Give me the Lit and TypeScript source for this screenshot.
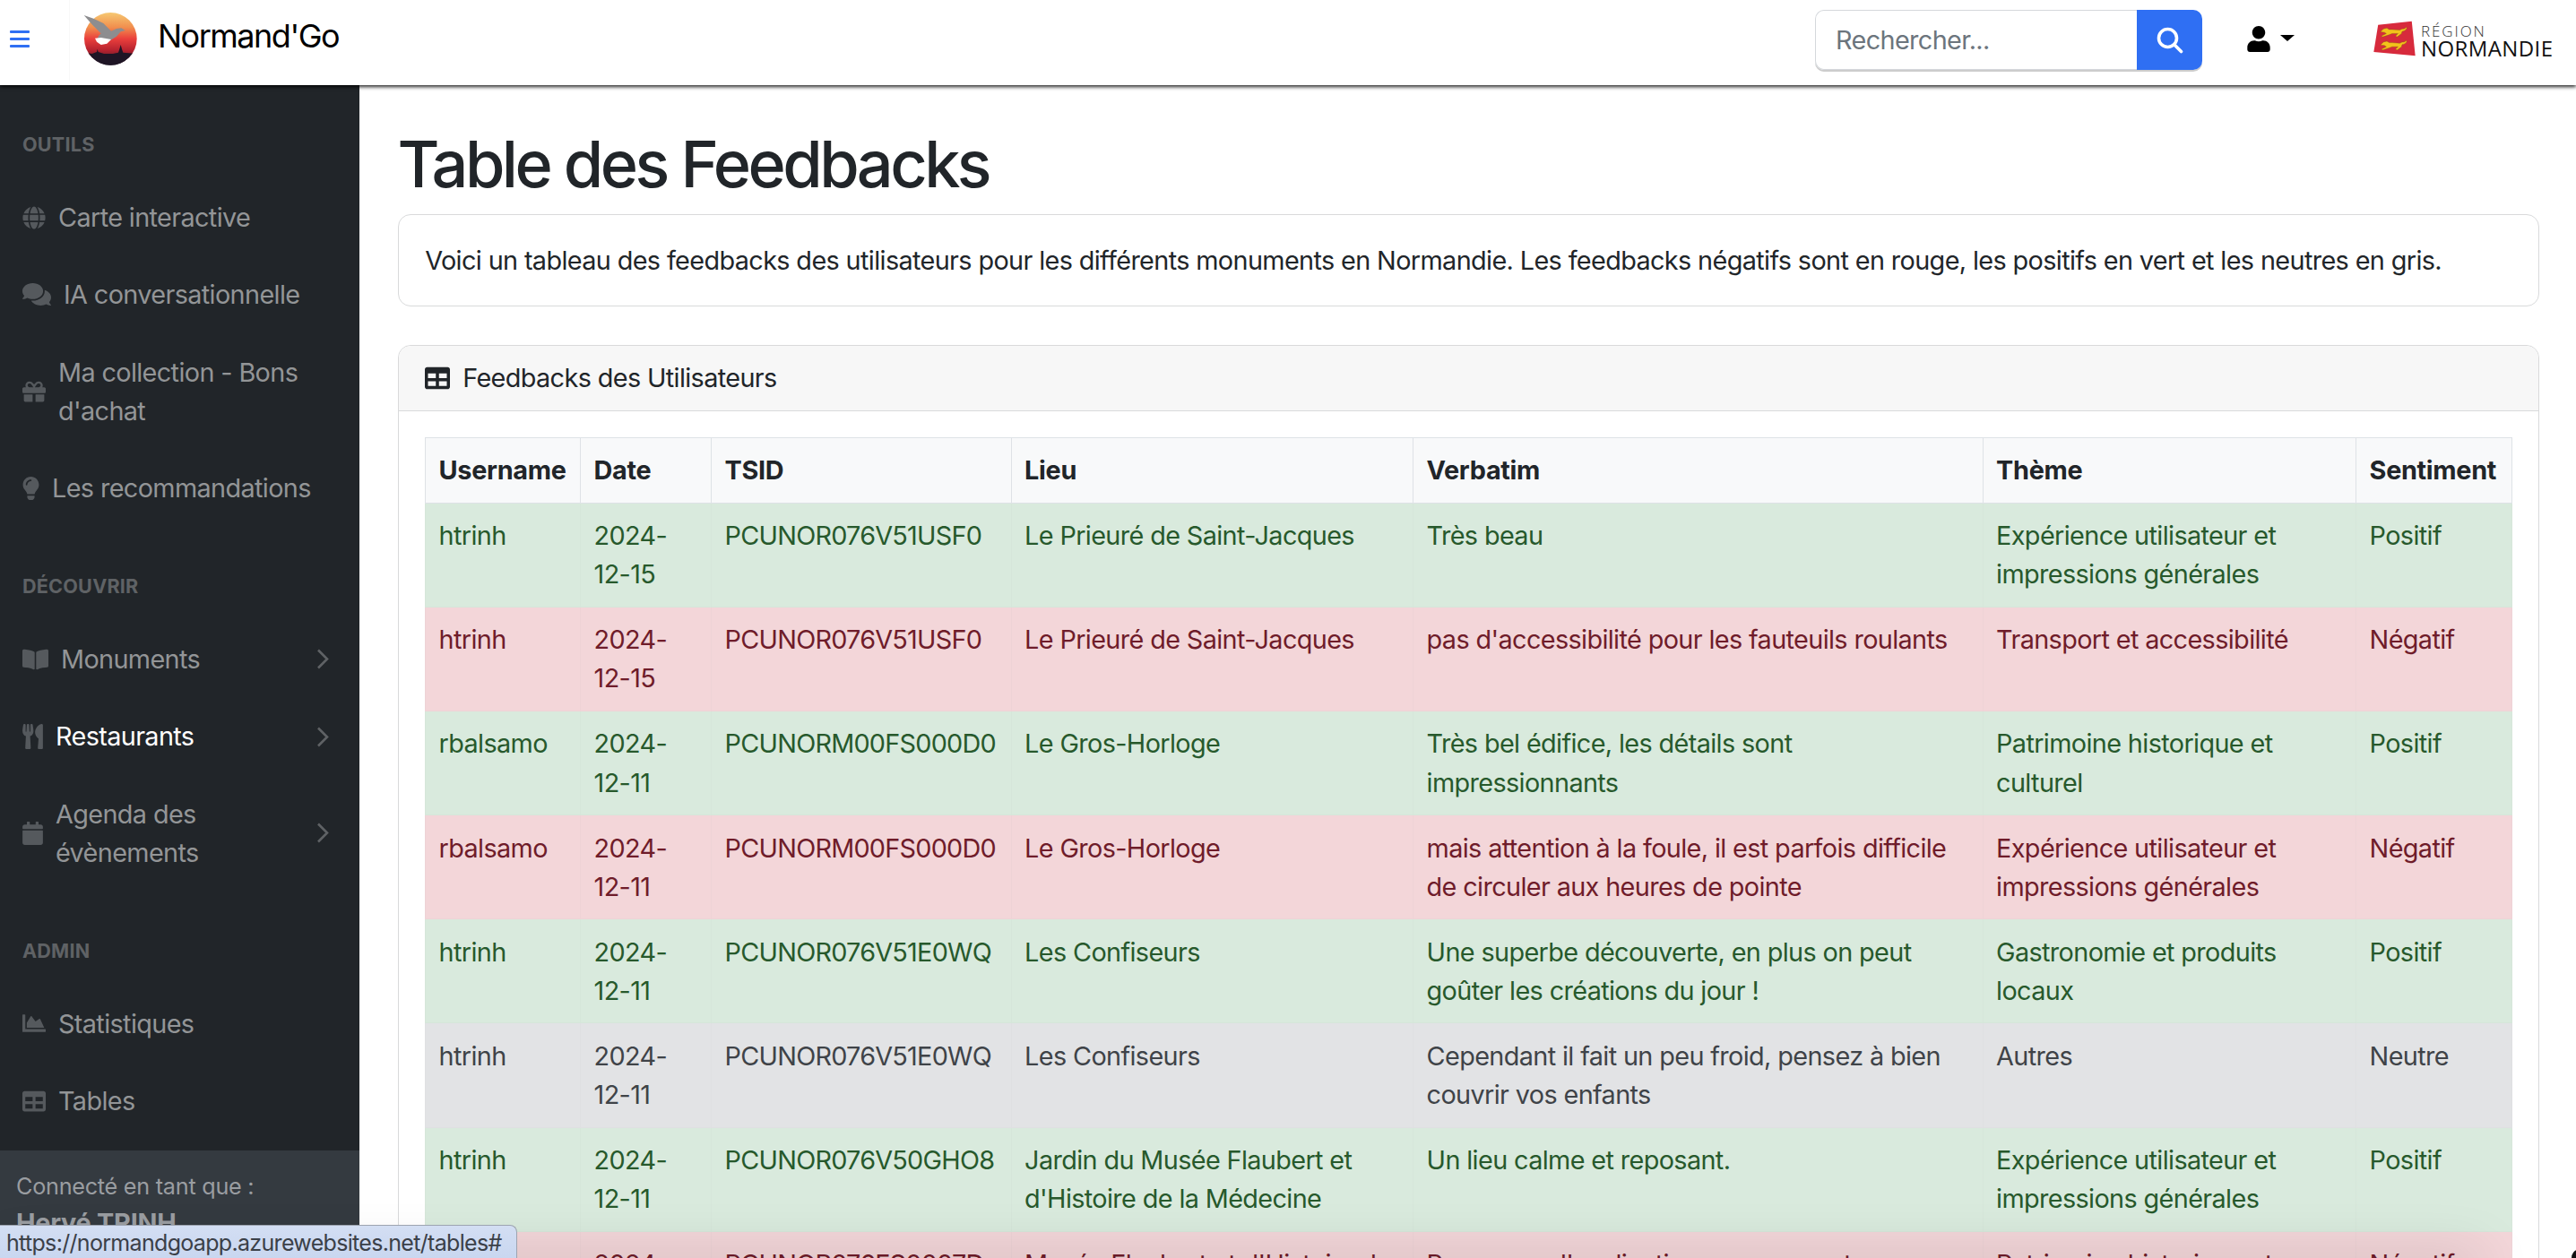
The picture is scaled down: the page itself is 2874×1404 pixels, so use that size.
import { LitElement, css, html, svg } from 'lit';
import { customElement } from 'lit/decorators.js';

const ICONS = {
  user: { box: '0 0 448 512', d: 'M224 256c70.7 0 128-57.3 128-128S294.7 0 224 0 96 57.3 96 128s57.3 128 128 128zm89.6 32h-16.7c-22.2 10.2-46.9 16-72.9 16s-50.6-5.8-72.9-16h-16.7C60.2 288 0 348.2 0 422.4V464c0 26.5 21.5 48 48 48h352c26.5 0 48-21.5 48-48v-41.6c0-74.2-60.2-134.4-134.4-134.4z' },
  table: { box: '0 0 512 512', d: 'M464 32H48C21.49 32 0 53.49 0 80v352c0 26.51 21.49 48 48 48h416c26.51 0 48-21.49 48-48V80c0-26.51-21.49-48-48-48zM224 416H64v-96h160v96zm0-160H64v-96h160v96zm224 160H288v-96h160v96zm0-160H288v-96h160v96z' },
  gift: { box: '0 0 512 512', d: 'M32 448c0 17.7 14.3 32 32 32h160V320H32v128zm256 32h160c17.7 0 32-14.3 32-32V320H288v160zm192-320h-42.1c6.2-12.1 10.1-25.5 10.1-40 0-48.5-39.5-88-88-88-41.6 0-68.5 21.3-103 68.3-34.5-47-61.4-68.3-103-68.3-48.5 0-88 39.5-88 88 0 14.5 3.8 27.9 10.1 40H32c-17.7 0-32 14.3-32 32v80c0 8.8 7.2 16 16 16h480c8.8 0 16-7.2 16-16v-80c0-17.7-14.3-32-32-32zm-326.1 0c-22.1 0-40-17.9-40-40s17.9-40 40-40c19.9 0 34.6 3.3 86.1 80h-86.1zm206.1 0h-86.1c51.4-76.5 65.7-80 86.1-80 22.1 0 40 17.9 40 40s-17.9 40-40 40z' },
  bulb: { box: '0 0 352 512', d: 'M96.06 454.35c.01 6.29 1.87 12.45 5.36 17.69l17.09 25.69a31.99 31.99 0 0 0 26.64 14.28h61.71a31.99 31.99 0 0 0 26.64-14.28l17.09-25.69a31.989 31.989 0 0 0 5.36-17.69l.04-38.35H96.01l.05 38.35zM0 176c0 44.37 16.45 84.85 43.56 115.78 16.52 18.85 42.36 58.23 52.21 91.45.04.26.07.52.11.78h160.24c.04-.26.07-.51.11-.78 9.85-33.22 35.69-72.6 52.21-91.45C335.55 260.85 352 220.37 352 176 352 78.61 272.91-.3 175.45 0 73.44.31 0 82.97 0 176zm176-80c-44.11 0-80 35.89-80 80 0 8.84-7.16 16-16 16s-16-7.16-16-16c0-61.76 50.24-112 112-112 8.84 0 16 7.16 16 16s-7.16 16-16 16z' },
  calendar: { box: '0 0 448 512', d: 'M12 192h424c6.6 0 12 5.4 12 12v260c0 26.5-21.5 48-48 48H48c-26.5 0-48-21.5-48-48V204c0-6.6 5.4-12 12-12zm436-44v-36c0-26.5-21.5-48-48-48h-48V12c0-6.6-5.4-12-12-12h-40c-6.6 0-12 5.4-12 12v52H160V12c0-6.6-5.4-12-12-12h-40c-6.6 0-12 5.4-12 12v52H48C21.5 64 0 85.5 0 112v36c0 6.6 5.4 12 12 12h424c6.6 0 12-5.4 12-12z' },
  book: { box: '0 0 576 512', d: 'M542.22 32.05c-54.8 3.11-163.72 14.43-230.96 55.59-4.64 2.84-7.27 7.89-7.27 13.17v363.87c0 11.55 12.63 18.85 23.28 13.49 69.18-34.82 169.23-44.32 218.7-46.92 16.89-.89 30.02-14.43 30.02-30.66V62.75c.01-17.71-15.35-31.74-33.77-30.7zM264.73 87.64C197.5 46.48 88.58 35.17 33.78 32.05 15.36 31.01 0 45.04 0 62.75V400.6c0 16.24 13.13 29.78 30.02 30.66 49.49 2.6 149.59 12.11 218.77 46.95 10.62 5.35 23.21-1.94 23.21-13.46V100.63c0-5.29-2.62-10.1-7.27-12.99z' },
  utensils: { box: '0 0 416 512', d: 'M207.9 15.2c.8 4.7 16.1 94.5 16.1 128.8 0 52.3-27.8 89.6-68.9 104.6L168 486.7c.7 13.7-10.2 25.3-24 25.3H80c-13.7 0-24.7-11.5-24-25.3l12.9-238.1C27.7 233.6 0 196.2 0 144 0 109.6 15.3 19.9 16.1 15.2 19.3-5.1 61.4-5.4 64 16.3v141.2c1.3 3.4 15.1 3.2 16 0 1.4-25.3 7.9-139.2 8-141.8 3.3-20.8 44.7-20.8 47.9 0 .2 2.7 6.6 116.5 8 141.8.9 3.2 14.8 3.4 16 0V16.3c2.6-21.6 44.8-21.4 48-1.1zm119.2 285.7l-15 185.1c-1.2 14 9.9 26 23.9 26h56c13.3 0 24-10.7 24-24V24c0-13.2-10.7-24-24-24-82.5 0-221.4 178.5-64.9 300.9z' },
  globe: { box: '0 0 496 512', d: 'M336.5 160C322 70.7 287.8 8 248 8s-74 62.7-88.5 152h177zM152 256c0 22.2 1.2 43.5 3.3 64h185.3c2.1-20.5 3.3-41.8 3.3-64s-1.2-43.5-3.3-64H155.3c-2.1 20.5-3.3 41.8-3.3 64zm324.7-96c-28.6-67.9-86.5-120.4-158-141.6 24.4 33.8 41.2 84.7 50 141.6h108zM177.2 18.4C105.8 39.6 47.8 92.1 19.3 160h108c8.7-56.9 25.5-107.8 49.9-141.6zM487.4 192H372.7c2.1 21 3.3 42.5 3.3 64s-1.2 43-3.3 64h114.6c5.5-20.5 8.6-41.8 8.6-64s-3.1-43.5-8.5-64zM120 256c0-21.5 1.2-43 3.3-64H8.6C3.2 212.5 0 233.8 0 256s3.2 43.5 8.6 64h114.6c-2-21-3.2-42.5-3.2-64zm39.5 96c14.5 89.3 48.7 152 88.5 152s74-62.7 88.5-152h-177zm159.3 141.6c71.4-21.2 129.4-73.7 158-141.6h-108c-8.8 56.9-25.6 107.8-50 141.6zM19.3 352c28.6 67.9 86.5 120.4 158 141.6-24.4-33.8-41.2-84.7-50-141.6h-108z' },
  comments: { box: '0 0 576 512', d: 'M416 192c0-88.4-93.1-160-208-160S0 103.6 0 192c0 34.3 14.1 65.9 38 92-13.4 30.2-35.5 54.2-35.8 54.5-2.2 2.3-2.8 5.7-1.5 8.7S4.8 352 8 352c36.6 0 66.9-12.3 88.7-25 32.2 15.7 70.3 25 111.3 25 114.9 0 208-71.6 208-160zm122 220c23.9-26 38-57.7 38-92 0-66.9-53.5-124.2-129.3-148.1.9 6.6 1.3 13.3 1.3 20.1 0 105.9-107.7 192-240 192-10.8 0-21.3-.8-31.7-1.9C207.8 439.6 281.8 480 368 480c41 0 79.1-9.2 111.3-25 21.8 12.7 52.1 25 88.7 25 3.2 0 6.1-1.9 7.3-4.8 1.3-2.9.7-6.3-1.5-8.7-.3-.3-22.4-24.2-35.8-54.5z' },
  chart: { box: '0 0 512 512', d: 'M500 384c6.6 0 12 5.4 12 12v40c0 6.6-5.4 12-12 12H12c-6.6 0-12-5.4-12-12V76c0-6.6 5.4-12 12-12h40c6.6 0 12 5.4 12 12v308h436zM372.7 159.5L288 216l-85.3-113.7c-5.1-6.8-15.5-6.3-19.9 1L96 248v104h384l-89.9-187.8c-3.2-6.5-11.4-8.7-17.4-4.7z' },
};

type IconName = keyof typeof ICONS;

const icon = (name: IconName, w: number, h: number) => html`<svg
  class="icon"
  width=${w}
  height=${h}
  viewBox=${ICONS[name].box}
  fill="currentColor"
>
  ${svg`<path d=${ICONS[name].d}></path>`}
</svg>`;

interface NavItem {
  label: string;
  icon: IconName;
  w: number;
  h?: number;
  chevron?: boolean;
  active?: boolean;
}

const NAV: { heading: string; items: NavItem[] }[] = [
  {
    heading: 'OUTILS',
    items: [
      { label: 'Carte interactive', icon: 'globe', w: 26 },
      { label: 'IA conversationnelle', icon: 'comments', w: 32, h: 29 },
      { label: "Ma collection - Bons d'achat", icon: 'gift', w: 26 },
      { label: 'Les recommandations', icon: 'bulb', w: 19 },
    ],
  },
  {
    heading: 'DÉCOUVRIR',
    items: [
      { label: 'Monuments', icon: 'book', w: 29, chevron: true },
      { label: 'Restaurants', icon: 'utensils', w: 23, h: 28, chevron: true, active: true },
      { label: 'Agenda des évènements', icon: 'calendar', w: 23, chevron: true },
    ],
  },
  {
    heading: 'ADMIN',
    items: [
      { label: 'Statistiques', icon: 'chart', w: 26 },
      { label: 'Tables', icon: 'table', w: 26 },
    ],
  },
];

const EXP = 'Expérience utilisateur et impressions générales';

// kind, username, date, tsid, lieu, verbatim, theme, sentiment
const ROWS: string[][] = [
  ['pos', 'htrinh', '2024-12-15', 'PCUNOR076V51USF0', 'Le Prieuré de Saint-Jacques', 'Très beau', EXP, 'Positif'],
  ['neg', 'htrinh', '2024-12-15', 'PCUNOR076V51USF0', 'Le Prieuré de Saint-Jacques', "pas d'accessibilité pour les fauteuils roulants", 'Transport et accessibilité', 'Négatif'],
  ['pos', 'rbalsamo', '2024-12-11', 'PCUNORM00FS000D0', 'Le Gros-Horloge', 'Très bel édifice, les détails sont impressionnants', 'Patrimoine historique et culturel', 'Positif'],
  ['neg', 'rbalsamo', '2024-12-11', 'PCUNORM00FS000D0', 'Le Gros-Horloge', 'mais attention à la foule, il est parfois difficile de circuler aux heures de pointe', EXP, 'Négatif'],
  ['pos', 'htrinh', '2024-12-11', 'PCUNOR076V51E0WQ', 'Les Confiseurs', 'Une superbe découverte, en plus on peut goûter les créations du jour !', 'Gastronomie et produits locaux', 'Positif'],
  ['neu', 'htrinh', '2024-12-11', 'PCUNOR076V51E0WQ', 'Les Confiseurs', 'Cependant il fait un peu froid, pensez à bien couvrir vos enfants', 'Autres', 'Neutre'],
  ['pos', 'htrinh', '2024-12-11', 'PCUNOR076V50GHO8', "Jardin du Musée Flaubert et d'Histoire de la Médecine", 'Un lieu calme et reposant.', EXP, 'Positif'],
  ['neg', 'htrinh', '2024-12-11', 'PCUNOR076FS0007D', "Musée Flaubert et d'Histoire de la Médecine", "Pas assez d'explications concernant son histoire", 'Patrimoine historique et culturel', 'Négatif'],
];

const HEADERS = ['Username', 'Date', 'TSID', 'Lieu', 'Verbatim', 'Thème', 'Sentiment'];

@customElement('app-root')
export class AppRoot extends LitElement {
  static styles = css`
    :host {
      display: block;
      position: relative;
      height: 100vh;
      overflow: hidden;
      background: #fff;
      color: #212529;
      font-family: Inter, 'Liberation Sans', sans-serif;
      font-size: 28.8px;
      line-height: 1.5;
      letter-spacing: -0.62px;
    }

    .icon {
      display: block;
      flex: none;
    }

    /* top bar */
    .navbar {
      position: relative;
      z-index: 2;
      height: 95px;
      display: flex;
      align-items: center;
      background: #fff;
      box-shadow: 0 2px 4px rgba(0, 0, 0, 0.85);
    }

    .toggle {
      width: 78px;
      height: 90px;
      box-sizing: border-box;
      padding: 34px 0 0 11px;
      color: #2f6ff3;
      border-right: 1px solid #f8f8f8;
      align-self: flex-start;
    }

    .gull {
      margin-left: 13px;
      margin-top: -8px;
    }

    .brand {
      margin-left: 21px;
      margin-top: -15px;
      font-size: 36px;
      letter-spacing: -1.5px;
      color: #000;
    }

    .nav-right {
      margin-left: auto;
      display: flex;
      align-items: flex-start;
      padding: 11px 27px 0 0;
      align-self: flex-start;
    }

    .search {
      display: flex;
      height: 67px;
      border-radius: 10px;
      box-shadow: 0 2px 0 #cccccc;
    }

    .search-input {
      width: 359px;
      box-sizing: border-box;
      padding-left: 22px;
      display: flex;
      align-items: center;
      color: #6c757d;
      border: 1px solid #d5d8dc;
      border-right: 0;
      border-radius: 10px 0 0 10px;
    }

    .search-btn {
      width: 73px;
      display: flex;
      align-items: center;
      justify-content: center;
      color: #fff;
      background: #2f6ff3;
      border-radius: 0 10px 10px 0;
    }

    .user {
      display: flex;
      margin-left: 50px;
      margin-top: 18px;
      color: #000;
      width: 53px;
    }

    .caret {
      width: 0;
      height: 0;
      margin: 10px 0 0 11px;
      border-left: 8px solid transparent;
      border-right: 8px solid transparent;
      border-top: 7px solid #000;
    }

    .region {
      display: flex;
      align-items: flex-start;
      margin-left: 88px;
      margin-top: 12px;
      gap: 6px;
    }

    .region-text {
      width: 146px;
      margin-top: 3px;
      display: flex;
      flex-direction: column;
      font-family: 'Open Sans', sans-serif;
      letter-spacing: 0;
      color: #111;
    }

    .region-top {
      font-size: 17px;
      line-height: 18px;
      font-weight: 300;
      letter-spacing: 1.9px;
      color: #333;
    }

    .region-bottom {
      font-size: 24px;
      line-height: 20px;
      font-weight: 400;
      letter-spacing: 0.4px;
      white-space: nowrap;
    }

    /* page below the bar */
    .body {
      display: flex;
      height: calc(100vh - 95px);
    }

    .sidebar {
      width: 401px;
      flex: none;
      display: flex;
      flex-direction: column;
      background: #212529;
      color: #939597;
    }

    .menu {
      flex: 1;
    }

    .heading {
      padding: 50.4px 25px 21.6px;
      font-size: 21.6px;
      font-weight: 700;
      letter-spacing: 0.2px;
      color: #5f6265;
    }

    .link {
      display: flex;
      align-items: center;
      padding: 21.6px 34px 21.6px 25px;
      gap: 14px;
    }

    .link .icon {
      color: #55595d;
    }

    .link.active {
      color: #fff;
    }

    .link-text {
      flex: 1;
    }

    .link .chevron {
      color: #5f6265;
    }

    .user-panel {
      height: 120px;
      flex: none;
      box-sizing: border-box;
      padding: 21.6px 18px;
      background: #343a40;
      color: #9a9da1;
      font-size: 25.2px;
      letter-spacing: -0.25px;
    }

    .user-name {
      font-size: 28.8px;
      font-weight: 700;
    }

    /* main column */
    .main {
      flex: 1;
      min-width: 0;
      box-sizing: border-box;
      padding: 45px 41px 0 43.4px;
      overflow: hidden;
    }

    h1 {
      margin: 0 0 12.6px -1px;
      font-size: 72px;
      font-weight: 550;
      line-height: 1.2;
      letter-spacing: -3.55px;
    }

    .card {
      border: 1px solid #d9dadb;
      border-radius: 14px;
      background: #fff;
    }

    .intro {
      padding: 28.8px;
      margin-bottom: 43.2px;
    }

    .card-header {
      display: flex;
      align-items: center;
      gap: 14px;
      padding: 14.4px 28.8px;
      background: #f7f7f7;
      border-bottom: 1px solid #d9dadb;
      border-radius: 14px 14px 0 0;
    }

    .card-body {
      padding: 28.8px;
    }

    table {
      width: 2328px;
      table-layout: fixed;
      border-collapse: collapse;
    }

    .c-username { width: 173px; }
    .c-date { width: 146px; }
    .c-tsid { width: 334.5px; }
    .c-lieu { width: 448.5px; }
    .c-verbatim { width: 635.5px; }
    .c-theme { width: 416.5px; }
    .c-sentiment { width: 174px; }

    th,
    td {
      padding: 14.4px;
      text-align: left;
      vertical-align: top;
      border: 1px solid #dee2e6;
      overflow-wrap: anywhere;
    }

    td:nth-child(3) {
      white-space: nowrap;
      overflow-wrap: normal;
      letter-spacing: -0.75px;
    }

    th {
      background: #f8f9fa;
      font-weight: 700;
      letter-spacing: -0.3px;
    }

    tr.pos td {
      background: #d9eadd;
      color: #27592c;
      border-color: #d6e6da;
    }

    tr.neg td {
      background: #f3d6d9;
      color: #6f1c2a;
      border-color: #eed3d6;
    }

    tr.neu td {
      background: #e2e3e5;
      color: #3f4348;
      border-color: #dfe0e2;
    }

    /* browser overlays in the capture */
    .status {
      position: absolute;
      left: 0;
      bottom: 0;
      z-index: 4;
      width: 577px;
      height: 37px;
      box-sizing: border-box;
      padding: 1px 0 0 7px;
      font-size: 25px;
      line-height: 36px;
      letter-spacing: -0.68px;
      color: #3b4048;
      white-space: nowrap;
      background: linear-gradient(#d3def3, #c9d7f0);
      border: 1px solid #9da4b0;
      border-left: 0;
      border-bottom: 0;
      border-radius: 0 8px 0 0;
    }

    .dock-shadow {
      position: absolute;
      left: 0;
      top: 100%;
      z-index: 3;
      width: 2770px;
      height: 20px;
      box-shadow: 0 0 60px rgba(0, 0, 0, 0.22);
    }

    .corner {
      position: absolute;
      right: -9px;
      bottom: -9px;
      z-index: 4;
      width: 14px;
      height: 18px;
      border-radius: 50%;
      background: #111;
    }
  `;

  private renderGull() {
    return html`<svg class="gull" width="64" height="64" viewBox="95 32 192 192">
      <defs>
        <linearGradient id="sky" x1="0" y1="0" x2="0" y2="1">
          <stop offset="0" stop-color="#f6c872"></stop>
          <stop offset="0.28" stop-color="#f18f4e"></stop>
          <stop offset="0.5" stop-color="#ea3f3c"></stop>
          <stop offset="0.72" stop-color="#b5222f"></stop>
          <stop offset="1" stop-color="#1e1525"></stop>
        </linearGradient>
        <clipPath id="disc"><circle cx="192" cy="126" r="88"></circle></clipPath>
      </defs>
      <circle cx="192" cy="126" r="88" fill="url(#sky)"></circle>
      <path
        clip-path="url(#disc)"
        d="M104 172 L130 176 L146 170 L148 160 L151 170 L170 176 L200 176 L218 172 L222 160 L226 146 L230 160 L234 172 L280 176 L280 220 L104 220 Z"
        fill="#1e1525"
      ></path>
      <path
        d="M103 47 L135 58 L168 74 L194 100 L212 92 L228 90 L241 98 L226 102 L212 118 L190 132 L168 136 L146 130 L152 116 L160 108 L132 80 Z"
        fill="#8d8d8f"
      ></path>
      <path d="M140 124 L160 122 L194 128 L180 142 L160 146 L146 136 Z" fill="#fff"></path>
    </svg>`;
  }

  private renderFlag() {
    const lion = (y: number) => svg`<path
      d="M166 ${y + 16} L176 ${y + 6} L188 ${y + 3} L196 ${y + 8} L206 ${y + 8} L232 ${y + 10} L240 ${y + 6} Q250 ${y + 8} 254 ${y} L256 ${y + 4} Q252 ${y + 14} 240 ${y + 15} L238 ${y + 22} L228 ${y + 30} L222 ${y + 34} L218 ${y + 30} L226 ${y + 22} L206 ${y + 22} L196 ${y + 26} L172 ${y + 34} L170 ${y + 30} L186 ${y + 22} L180 ${y + 18} Z"
      fill="#f3c21b"
      stroke="#7d5a12"
      stroke-width="1.2"
    ></path>`;
    return html`<svg class="icon" width="47" height="40" viewBox="142 39 144 120">
      <path d="M158 52 L273 40 L285 158 L143 145 Z" fill="#d72a3c"></path>
      ${lion(60)} ${lion(105)}
    </svg>`;
  }

  private renderLink(item: NavItem) {
    return html`<div class="link ${item.active ? 'active' : ''}">
      ${icon(item.icon, item.w, item.h ?? 26)}
      <span class="link-text">${item.label}</span>
      ${item.chevron
        ? html`<svg class="icon chevron" width="14" height="23" viewBox="0 0 14 23" fill="none">
            <path d="M2 1.5 L12 11.5 L2 21.5" stroke="currentColor" stroke-width="2.6"></path>
          </svg>`
        : ''}
    </div>`;
  }

  render() {
    return html`
      <nav class="navbar">
        <div class="toggle">
          <svg class="icon" width="22" height="19" viewBox="0 0 22 19" fill="currentColor">
            <rect width="22" height="3" y="0" rx="1"></rect>
            <rect width="22" height="3" y="8" rx="1"></rect>
            <rect width="22" height="3" y="16" rx="1"></rect>
          </svg>
        </div>
        ${this.renderGull()}
        <div class="brand">Normand'Go</div>
        <div class="nav-right">
          <div class="search">
            <div class="search-input">Rechercher...</div>
            <div class="search-btn">
              <svg class="icon" width="30" height="30" viewBox="0 0 30 30" fill="none" stroke="currentColor" stroke-width="3.6">
                <circle cx="12.5" cy="12.5" r="10"></circle>
                <path d="M20 20 L27.5 27.5" stroke-linecap="round"></path>
              </svg>
            </div>
          </div>
          <div class="user">${icon('user', 26, 29)}<span class="caret"></span></div>
          <div class="region">
            ${this.renderFlag()}
            <div class="region-text">
              <span class="region-top">RÉGION</span>
              <span class="region-bottom">NORMANDIE</span>
            </div>
          </div>
        </div>
      </nav>
      <div class="body">
        <aside class="sidebar">
          <div class="menu">
            ${NAV.map(
              (section) => html`
                <div class="heading">${section.heading}</div>
                ${section.items.map((item) => this.renderLink(item))}
              `
            )}
          </div>
          <div class="user-panel">
            <div>Connecté en tant que :</div>
            <div class="user-name">Hervé TRINH</div>
          </div>
        </aside>
        <main class="main">
          <h1>Table des Feedbacks</h1>
          <div class="card intro">
            Voici un tableau des feedbacks des utilisateurs pour les différents monuments en
            Normandie. Les feedbacks négatifs sont en rouge, les positifs en vert et les neutres
            en gris.
          </div>
          <div class="card">
            <div class="card-header">${icon('table', 28, 28)}Feedbacks des Utilisateurs</div>
            <div class="card-body">
              <table>
                <colgroup>
                  <col class="c-username" />
                  <col class="c-date" />
                  <col class="c-tsid" />
                  <col class="c-lieu" />
                  <col class="c-verbatim" />
                  <col class="c-theme" />
                  <col class="c-sentiment" />
                </colgroup>
                <thead>
                  <tr>
                    ${HEADERS.map((h) => html`<th>${h}</th>`)}
                  </tr>
                </thead>
                <tbody>
                  ${ROWS.map(
                    ([kind, ...cells]) => html`<tr class=${kind}>
                      ${cells.map((c) => html`<td>${c}</td>`)}
                    </tr>`
                  )}
                </tbody>
              </table>
            </div>
          </div>
        </main>
      </div>
      <div class="dock-shadow"></div>
      <div class="status">https://normandgoapp.azurewebsites.net/tables#</div>
      <div class="corner"></div>
    `;
  }
}
